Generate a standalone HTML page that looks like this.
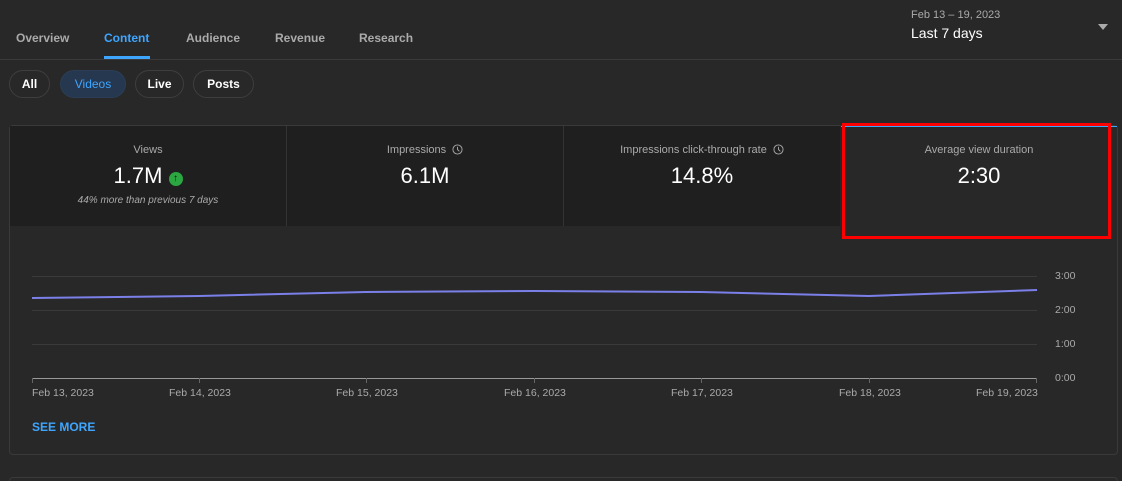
<!DOCTYPE html>
<html><head><style>
html,body{margin:0;width:1122px;height:481px;overflow:hidden}
body{background:#282828;font-family:"Liberation Sans",sans-serif;position:relative;color:#fff}
.a{position:absolute}
.tab{position:absolute;top:31px;font-size:12px;font-weight:bold;color:#aaa}
.chip{position:absolute;top:70px;height:28px;border:1px solid #3e3e3e;border-radius:15px;font-size:12px;font-weight:bold;line-height:27px;text-align:center;color:#fff;box-sizing:border-box}
.card{position:absolute;top:126px;width:276px;height:100px;background:#1f1f1f;text-align:center}
.t{position:absolute;top:18px;width:100%;font-size:11px;color:#aaa}
.v{position:absolute;top:37px;width:100%;font-size:22px;color:#fff}
.clk{display:inline-block;width:11px;height:11px;vertical-align:-2px;margin-left:6px}
.xl{position:absolute;top:387px;font-size:10.5px;color:#aaa}
.yl{position:absolute;left:1055px;font-size:10.5px;color:#aaa}
</style></head><body>
<div class="tab" style="left:16px">Overview</div>
<div class="tab" style="left:104px;color:#3ea6ff">Content</div>
<div class="a" style="left:104px;top:56px;width:46px;height:3px;background:#3ea6ff"></div>
<div class="tab" style="left:186px">Audience</div>
<div class="tab" style="left:275px">Revenue</div>
<div class="tab" style="left:359px">Research</div>
<div class="a" style="left:0;top:59px;width:1122px;height:1px;background:#3a3a3a"></div>
<div class="a" style="left:911px;top:9px;font-size:11px;color:#aaa">Feb 13 – 19, 2023</div>
<div class="a" style="left:911px;top:25px;font-size:14px;color:#fff">Last 7 days</div>
<div class="a" style="left:1098px;top:24px;border-left:5px solid transparent;border-right:5px solid transparent;border-top:6px solid #aaa"></div>
<div class="chip" style="left:9px;width:41px">All</div>
<div class="chip" style="left:60px;background:#263850;border-color:#2b3e55;color:#3ea6ff;font-weight:normal;width:66px">Videos</div>
<div class="chip" style="left:135px;width:49px">Live</div>
<div class="chip" style="left:193px;width:61px">Posts</div>
<div class="a" style="left:9px;top:125px;width:1107px;height:328px;border:1px solid #3a3a3a;border-radius:4px"></div>
<div class="card" style="left:10px"><div class="t">Views</div><div class="v">1.7M <span style="display:inline-block;width:14px;height:14px;border-radius:50%;background:#2ba640;vertical-align:2px;font-size:10px;line-height:14px;color:#111;font-weight:bold">↑</span></div><div class="a" style="top:69px;width:100%;font-size:10px;font-style:italic;color:#aaa">44% more than previous 7 days</div></div>
<div class="card" style="left:287px"><div class="t">Impressions<svg class="clk" viewBox="0 0 12 12"><circle cx="6" cy="6" r="5" fill="none" stroke="#aaa"/><path d="M6 3v3l2 2" fill="none" stroke="#aaa"/></svg></div><div class="v">6.1M</div></div>
<div class="card" style="left:564px"><div class="t">Impressions click-through rate<svg class="clk" viewBox="0 0 12 12"><circle cx="6" cy="6" r="5" fill="none" stroke="#aaa"/><path d="M6 3v3l2 2" fill="none" stroke="#aaa"/></svg></div><div class="v">14.8%</div></div>
<div class="card" style="left:841px;background:#282828;width:276px"><div class="t">Average view duration</div><div class="v">2:30</div></div>
<div class="a" style="left:841px;top:126px;width:276px;height:1px;background:#3ea6ff"></div>
<div class="a" style="left:286px;top:126px;width:1px;height:100px;background:#333"></div>
<div class="a" style="left:563px;top:126px;width:1px;height:100px;background:#333"></div>
<div class="a" style="left:842px;top:123px;width:263px;height:110px;border:3px solid #f00"></div>
<svg class="a" style="left:0;top:0" width="1122" height="481">
<g stroke="#3a3a3a" stroke-width="1"><line x1="32" y1="276.5" x2="1037" y2="276.5"/><line x1="32" y1="310.5" x2="1037" y2="310.5"/><line x1="32" y1="344.5" x2="1037" y2="344.5"/></g>
<line x1="32" y1="378.5" x2="1037" y2="378.5" stroke="#999"/>
<g stroke="#666"><line x1="32.5" y1="378" x2="32.5" y2="383"/><line x1="199.5" y1="378" x2="199.5" y2="383"/><line x1="366.5" y1="378" x2="366.5" y2="383"/><line x1="534.5" y1="378" x2="534.5" y2="383"/><line x1="701.5" y1="378" x2="701.5" y2="383"/><line x1="869.5" y1="378" x2="869.5" y2="383"/><line x1="1036.5" y1="378" x2="1036.5" y2="383"/></g>
<polyline fill="none" stroke="#7b7fe8" stroke-width="2" points="32,298 199,296 366,292 534,291 701,292 869,296 1037,290"/>
</svg>
<div class="xl" style="left:32px">Feb 13, 2023</div>
<div class="xl" style="left:169px">Feb 14, 2023</div>
<div class="xl" style="left:336px">Feb 15, 2023</div>
<div class="xl" style="left:504px">Feb 16, 2023</div>
<div class="xl" style="left:671px">Feb 17, 2023</div>
<div class="xl" style="left:839px">Feb 18, 2023</div>
<div class="xl" style="left:976px">Feb 19, 2023</div>
<div class="yl" style="top:270px">3:00</div>
<div class="yl" style="top:304px">2:00</div>
<div class="yl" style="top:338px">1:00</div>
<div class="yl" style="top:372px">0:00</div>
<div class="a" style="left:32px;top:420px;font-size:12px;font-weight:bold;color:#3ea6ff">SEE MORE</div>
<div class="a" style="left:9px;top:477px;width:1107px;height:20px;border:1px solid #3a3a3a;border-radius:4px"></div>
</body></html>
